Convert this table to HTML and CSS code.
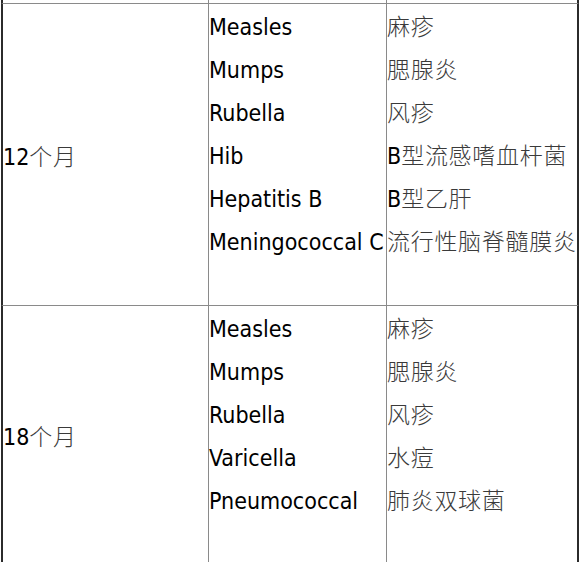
FILE: index.html
```html
<!DOCTYPE html>
<html lang="zh-CN">
<head>
<meta charset="utf-8">
<title>疫苗接种时间表</title>
<link rel="stylesheet" href="styles.css">
</head>
<body>
<table class="schedule">
  <colgroup>
    <col class="col-age">
    <col class="col-en">
    <col class="col-zh">
  </colgroup>
  <tr class="prev">
    <td class="age"></td>
    <td class="en"></td>
    <td class="zh"></td>
  </tr>
  <tr>
    <td class="age">12<span class="cjk">个月</span></td>
    <td class="en">
      <div class="line">Measles</div>
      <div class="line">Mumps</div>
      <div class="line">Rubella</div>
      <div class="line">Hib</div>
      <div class="line">Hepatitis B</div>
      <div class="line">Meningococcal C</div>
      <div class="line">&nbsp;</div>
    </td>
    <td class="zh">
      <div class="line"><span class="cjk">麻疹</span></div>
      <div class="line"><span class="cjk">腮腺炎</span></div>
      <div class="line"><span class="cjk">风疹</span></div>
      <div class="line">B<span class="cjk">型流感嗜血杆菌</span></div>
      <div class="line">B<span class="cjk">型乙肝</span></div>
      <div class="line"><span class="cjk">流行性脑脊髓膜炎</span></div>
      <div class="line">&nbsp;</div>
    </td>
  </tr>
  <tr>
    <td class="age">18<span class="cjk">个月</span></td>
    <td class="en">
      <div class="line">Measles</div>
      <div class="line">Mumps</div>
      <div class="line">Rubella</div>
      <div class="line">Varicella</div>
      <div class="line">Pneumococcal</div>
      <div class="line">&nbsp;</div>
    </td>
    <td class="zh">
      <div class="line"><span class="cjk">麻疹</span></div>
      <div class="line"><span class="cjk">腮腺炎</span></div>
      <div class="line"><span class="cjk">风疹</span></div>
      <div class="line"><span class="cjk">水痘</span></div>
      <div class="line"><span class="cjk">肺炎双球菌</span></div>
      <div class="line">&nbsp;</div>
    </td>
  </tr>
</table>
</body>
</html>
```
FILE: styles.css
```css
html, body {
  margin: 0;
  padding: 0;
  background: #ffffff;
}

.schedule {
  margin: -20px 0 0 1px;
  border-collapse: separate;
  border-spacing: 0;
  table-layout: fixed;
  width: 578px;
  font-family: "DejaVu Sans Condensed", "DejaVu Sans", "Noto Sans CJK SC", sans-serif;
  font-size: 23px;
  color: #000000;
}

.col-age { width: 207px; }
.col-en { width: 178px; }
.col-zh { width: 193px; }

.schedule td {
  box-sizing: border-box;
  padding: 0;
  border-top: 1px solid #8a8a8a;
  border-left: 1px solid #8a8a8a;
  vertical-align: top;
  white-space: nowrap;
}

.schedule td.age {
  border-left: 2px solid #2b2b2b;
  vertical-align: middle;
}

.schedule td.zh {
  border-right: 2px solid #2b2b2b;
}

.prev td {
  height: 23px;
}

.line {
  height: 43px;
  line-height: 43px;
}

.en .line {
  height: 41px;
  padding-top: 2px;
}

.cjk {
  font-family: "Noto Sans CJK SC", sans-serif;
  font-weight: 300;
  color: #3a3a3a;
  font-size: 23px;
  letter-spacing: 0.7px;
}
```
